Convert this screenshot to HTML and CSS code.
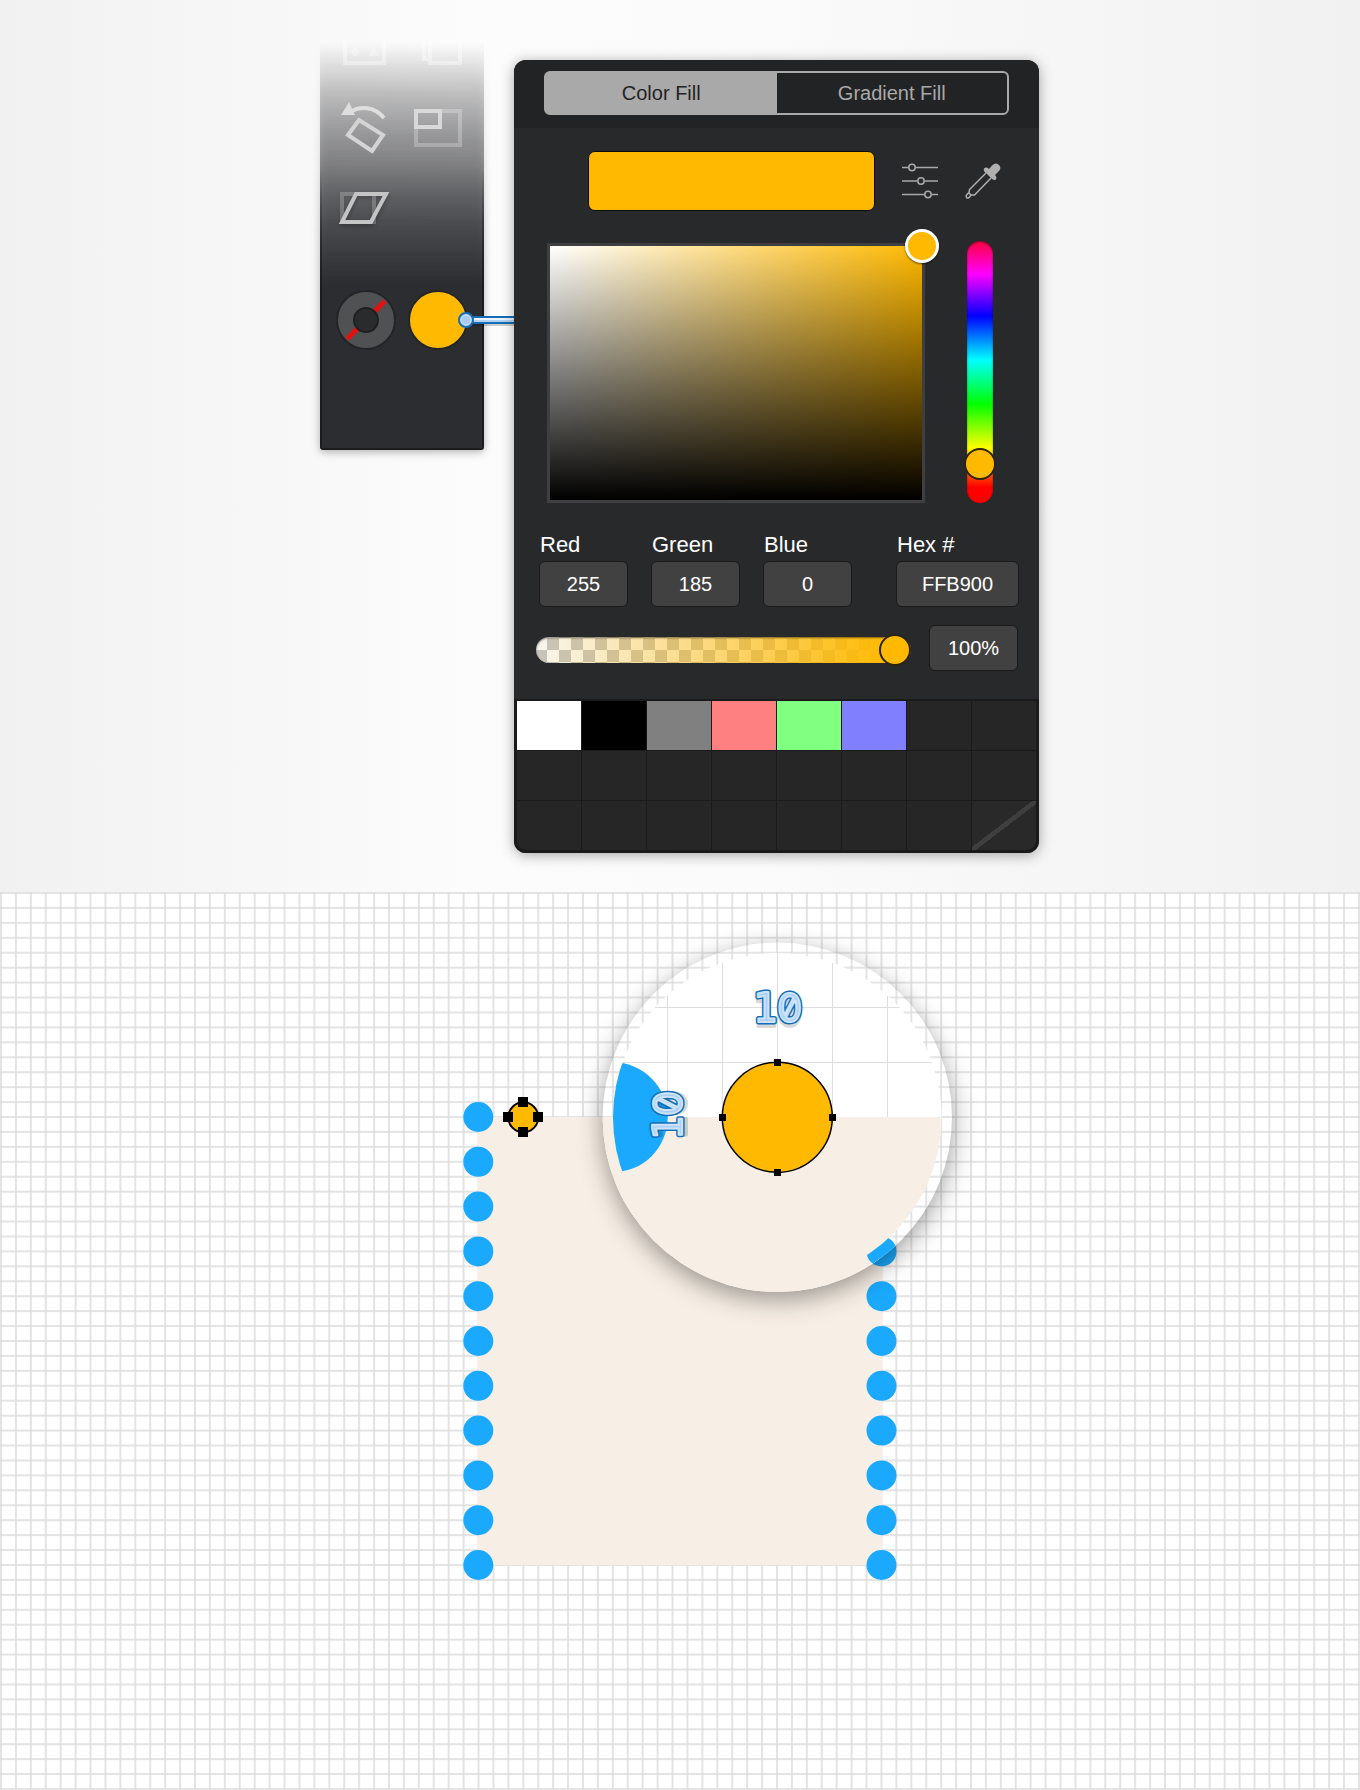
FILE: index.html
```html
<!DOCTYPE html>
<html lang="en">
<head>
<meta charset="utf-8">
<meta name="viewport" content="width=device-width, initial-scale=1">
<title>Color Fill</title>
<link rel="stylesheet" href="styles.css">
</head>
<body>
<main>
<section class="stage">
  <div class="toolbar">
    <div class="tools">
      <button class="tool" type="button" aria-label="Arrange">
        <svg width="48" height="52" viewBox="0 0 48 52"><path d="M3 18V40H42V18" fill="none" stroke="#fff" stroke-opacity=".4" stroke-width="4"/><path d="M13 24l5 5-5 5-5-5zM32 24l5 9H27z" fill="#fff" fill-opacity=".3"/></svg>
      </button>
      <button class="tool" type="button" aria-label="Duplicate">
        <svg width="48" height="52" viewBox="0 0 48 52"><path d="M16 18V40H46V18M10 18V36H16" fill="none" stroke="#fff" stroke-opacity=".4" stroke-width="4"/></svg>
      </button>
      <button class="tool" type="button" aria-label="Rotate">
        <svg width="48" height="52" viewBox="0 0 48 52"><path d="M8 9C19 2 33 4 42 15" fill="none" stroke="#dededf" stroke-width="4"/><path d="M-1 12L7 -1L13 12Z" fill="#dededf"/><path d="M17 17L41 32L30 48L6 32Z" fill="none" stroke="#d4d4d5" stroke-width="4"/></svg>
      </button>
      <button class="tool" type="button" aria-label="Scale">
        <svg width="48" height="52" viewBox="0 0 48 52"><path d="M2 8H46V42H2Z" fill="none" stroke="#fff" stroke-opacity=".25" stroke-width="4"/><path d="M2 8H26V24H2Z" fill="none" stroke="#d8d8d9" stroke-width="4"/></svg>
      </button>
      <button class="tool" type="button" aria-label="Skew">
        <svg class="skew" width="52" height="52" viewBox="0 0 52 52"><path d="M2 11H34V39H2Z" fill="none" stroke="#fff" stroke-opacity=".22" stroke-width="4"/><path d="M16 11H46L31 39H2Z" fill="none" stroke="#c4c4c4" stroke-width="4"/></svg>
      </button>
    </div>
    <div class="paints">
      <button class="paint" type="button" aria-label="Stroke: none">
        <svg width="60" height="60" viewBox="0 0 60 60"><circle cx="30" cy="30" r="29" fill="#505153" stroke="#242527" stroke-width="2"/><path d="M11 49L49 11" stroke="#e01212" stroke-width="5"/><circle cx="30" cy="30" r="12" fill="#2a2b2d" stroke="#1f2022" stroke-width="2"/></svg>
      </button>
      <button class="paint" type="button" aria-label="Fill">
        <svg width="60" height="60" viewBox="0 0 60 60"><circle cx="30" cy="30" r="29" fill="#ffb900" stroke="#242527" stroke-width="2"/></svg>
        <svg class="connector" width="60" height="20" viewBox="0 0 60 20"><path d="M12 12H60" stroke="#000" stroke-opacity=".18" stroke-width="8"/><path d="M12 10H60" stroke="#146db5" stroke-width="8"/><path d="M12 10H60" stroke="#b5d3f5" stroke-width="4"/><path d="M12 9H60" stroke="#eaf4ff" stroke-width="2"/><circle cx="10" cy="10" r="7" fill="#a9cbf3" stroke="#146db5" stroke-width="2"/><circle cx="10" cy="10" r="5" fill="none" stroke="#d5e7fb" stroke-width="1"/></svg>
      </button>
    </div>
  </div>

  <form class="panel">
    <header class="panel-head">
      <div class="tabs">
        <button class="tab tab-on" type="button">Color Fill</button>
        <button class="tab" type="button">Gradient Fill</button>
      </div>
    </header>
    <div class="panel-body">
      <div class="preview-row">
        <div class="preview"></div>
        <button class="icon" type="button" aria-label="Adjust">
          <svg width="36" height="36" viewBox="0 0 36 36" fill="none" stroke="#a9a9aa" stroke-width="1.5"><path d="M0 4.5H6.5M13.500 4.500H36M0 18H15.500M22.500 18H36M0 31.500H22.500M29.500 31.500H36"/><circle cx="10" cy="4.500" r="3.200"/><circle cx="19" cy="18" r="3.200"/><circle cx="26" cy="31.500" r="3.200"/></svg>
        </button>
        <button class="icon" type="button" aria-label="Pick color">
          <svg width="36" height="36" viewBox="0 0 36 36"><path d="M19 5.500Q21.500 3.500 24 6L27.500 2Q31 -1 34 2Q37 5 33.500 8.500L30 12Q32.500 14.500 30.500 17Q28 17.500 26 15L21 10Q18 8 19 5.500Z" fill="#b0b0b1"/><path d="M21 10L4.500 26.500L4 29.500L1.500 32Q.5 33.500 2 35Q3.500 35.500 5 33.500L6 32H9.500L26 15M3.500 29.500L6.500 32.500" fill="none" stroke="#b0b0b1" stroke-width="1.500"/></svg>
        </button>
      </div>
      <div class="field-row">
        <div class="field"><span class="field-knob"></span></div>
        <input class="hue" type="range" min="0" max="360" value="36" aria-label="Hue">
      </div>
      <div class="values">
        <label class="value">Red<input class="box" type="text" value="255"></label>
        <label class="value">Green<input class="box" type="text" value="185"></label>
        <label class="value">Blue<input class="box" type="text" value="0"></label>
        <label class="value value-hex">Hex #<input class="box" type="text" value="FFB900"></label>
      </div>
      <div class="alpha-row">
        <input class="alpha" type="range" min="0" max="100" value="100" aria-label="Opacity">
        <input class="box box-alpha" type="text" value="100%" aria-label="Opacity percent">
      </div>
    </div>
    <div class="swatches">
      <button class="swatch white" type="button" aria-label="White"></button>
      <button class="swatch black" type="button" aria-label="Black"></button>
      <button class="swatch gray" type="button" aria-label="Gray"></button>
      <button class="swatch red" type="button" aria-label="Red"></button>
      <button class="swatch green" type="button" aria-label="Green"></button>
      <button class="swatch blue" type="button" aria-label="Blue"></button>
      <span class="swatch"></span><span class="swatch"></span>
      <span class="swatch"></span><span class="swatch"></span><span class="swatch"></span><span class="swatch"></span>
      <span class="swatch"></span><span class="swatch"></span><span class="swatch"></span><span class="swatch"></span>
      <span class="swatch"></span><span class="swatch"></span><span class="swatch"></span><span class="swatch"></span>
      <span class="swatch"></span><span class="swatch"></span><span class="swatch"></span>
      <button class="swatch none" type="button" aria-label="No color"></button>
    </div>
  </form>
</section>

<section class="canvas">
  <svg class="drawing" viewBox="0 0 1360 898" role="img" aria-label="Dots snapped to a ten point grid, with a magnifier">
    <defs>
      <pattern id="grid" x="1" y="1" width="14.923" height="14.933" patternUnits="userSpaceOnUse">
        <path d="M0 0V14.933M14.923 0V14.933M0 0H14.923M0 14.933H14.923" stroke="#000" stroke-opacity=".14" stroke-width="1.500"/>
      </pattern>
      <clipPath id="rim"><circle cx="777.300" cy="225.300" r="174.700"/></clipPath>
      <clipPath id="lens"><circle cx="777.300" cy="225.300" r="164.300"/></clipPath>
      <filter id="shade" x="-20%" y="-20%" width="140%" height="140%"><feGaussianBlur stdDeviation="13"/></filter>
      <g id="ten">
        <text class="ten ten-shadow" x="-24" y="4">1<tspan class="zero">0</tspan></text>
        <text class="ten ten-edge" x="-24" y="0">1<tspan class="zero">0</tspan></text>
        <text class="ten ten-face" x="-24" y="0">1<tspan class="zero">0</tspan></text>
      </g>
      <g id="art">
        <rect width="1360" height="898" fill="#fff"/>
        <rect width="1360" height="898" fill="url(#grid)"/>
        <rect x="478" y="225" width="404" height="448" fill="#f7efe5"/>
        <g fill="#1aa9fd">
          <circle cx="478.300" cy="225" r="15"/><circle cx="478.300" cy="269.800" r="15"/><circle cx="478.300" cy="314.600" r="15"/><circle cx="478.300" cy="359.400" r="15"/><circle cx="478.300" cy="404.200" r="15"/><circle cx="478.300" cy="449" r="15"/><circle cx="478.300" cy="493.800" r="15"/><circle cx="478.300" cy="538.600" r="15"/><circle cx="478.300" cy="583.400" r="15"/><circle cx="478.300" cy="628.200" r="15"/><circle cx="478.300" cy="673" r="15"/>
          <circle cx="881.500" cy="359.400" r="15"/><circle cx="881.500" cy="404.200" r="15"/><circle cx="881.500" cy="449" r="15"/><circle cx="881.500" cy="493.800" r="15"/><circle cx="881.500" cy="538.600" r="15"/><circle cx="881.500" cy="583.400" r="15"/><circle cx="881.500" cy="628.200" r="15"/><circle cx="881.500" cy="673" r="15"/>
        </g>
      </g>
    </defs>
    <use href="#art"/>
    <circle cx="523.300" cy="225.300" r="15" fill="#ffb900" stroke="#000" stroke-width="2"/>
    <path d="M518 205h10v10h-10zM518 235h10v10h-10zM503 220h10v10h-10zM533 220h10v10h-10z"/>
    <circle cx="777.300" cy="233" r="174" fill-opacity=".4" filter="url(#shade)"/>
    <g clip-path="url(#rim)"><use href="#art"/></g>
    <g clip-path="url(#lens)">
      <rect x="600" y="50" width="360" height="175" fill="#fff"/>
      <path d="M667.500 50V225M722.500 50V225M777.500 50V225M832.500 50V225M887.500 50V225M600 115.500H960M600 170.500H960" stroke="#dedede" stroke-width="1"/>
      <rect x="600" y="225" width="360" height="180" fill="#f7efe5"/>
      <circle cx="612.700" cy="225.300" r="55" fill="#1aa9fd"/>
    </g>
    <circle cx="777.300" cy="225.300" r="55" fill="#ffb900" stroke="#000" stroke-width="1.500"/>
    <path d="M774 167h7v7h-7zM774 277h7v7h-7zM719 222h7v7h-7zM829 222h7v7h-7z"/>
    <use href="#ten" transform="translate(777 130)"/>
    <use href="#ten" transform="translate(682 224) rotate(-90)"/>
  </svg>
</section>
</main>
</body>
</html>
```
FILE: styles.css
```css
* { box-sizing: border-box; }

body {
  margin: 0;
  font-family: "Liberation Sans", Arial, sans-serif;
  background: #fff;
}

button {
  margin: 0;
  padding: 0;
  border: 0;
  background: none;
  font: inherit;
  color: inherit;
}

svg {
  display: block;
  overflow: visible;
}

.stage {
  display: flex;
  justify-content: center;
  align-items: flex-start;
  gap: 30px;
  padding: 0 1px 39px 0;
  background: linear-gradient(90deg, #f1f1f1, #fcfcfc 35%, #fbfbfb 55%, #f1f1f1);
}

/* Toolbar */

.toolbar {
  position: relative;
  width: 164px;
  margin-top: 9px;
  padding: 0 10px 59px;
}

.toolbar::before {
  content: "";
  position: absolute;
  inset: 0;
  border-radius: 0 0 3px 3px;
  background:
    linear-gradient(transparent 160px, #1b1c1e 280px) left / 2px 100% no-repeat,
    linear-gradient(transparent 160px, #1b1c1e 280px) right / 2px 100% no-repeat,
    linear-gradient(#1b1c1e, #1b1c1e) bottom / 100% 2px no-repeat,
    linear-gradient(rgba(44, 45, 49, 0) 33px, rgba(44, 45, 49, .09) 54px, rgba(44, 45, 49, .25) 88px, rgba(44, 45, 49, .38) 121px, rgba(44, 45, 49, .5) 154px, rgba(44, 45, 49, .68) 188px, rgba(44, 45, 49, .82) 221px, #2c2d31 276px);
  filter: drop-shadow(0 2px 4px rgba(0, 0, 0, .3));
}

.tools,
.paints {
  position: relative;
  display: grid;
  grid-template-columns: 1fr 1fr;
}

.tools { grid-auto-rows: 80px; }
.paints { grid-auto-rows: 142px; }

.tool,
.paint {
  display: flex;
  align-items: center;
  justify-content: center;
}

.skew { filter: drop-shadow(0 2px 2px rgba(0, 0, 0, .3)); }

.paint { position: relative; }

.connector {
  position: absolute;
  left: 54px;
  top: 61px;
}

/* Fill panel */

.panel {
  position: relative;
  width: 525px;
  margin-top: 60px;
  border-radius: 12px;
  background: #28292b;
  box-shadow: 0 2px 14px rgba(0, 0, 0, .35);
  color: #fff;
}

.panel-head {
  padding: 11px 30px 13px;
  border-radius: 12px 12px 0 0;
  background: #222325;
}

.tabs {
  display: grid;
  grid-template-columns: 1fr 1fr;
  height: 44px;
  border: 2px solid #a9a9a9;
  border-radius: 6px;
}

.tab {
  font-size: 20px;
  color: #a9a9a9;
}

.tab-on {
  background: #a9a9a9;
  color: #222325;
}

.panel-body { padding: 23px 20px 28px 22px; }

.preview-row {
  display: flex;
  align-items: center;
  gap: 27px;
  padding-left: 52px;
}

.preview {
  width: 287px;
  height: 60px;
  border: 1px solid #0c0c0c;
  border-radius: 7px;
  background: #ffb900;
}

.field-row {
  display: flex;
  align-items: flex-end;
  gap: 39px;
  margin-top: 30px;
  padding-left: 11px;
}

.field {
  position: relative;
  width: 378px;
  height: 260px;
  border: 3px solid #3f3f41;
  background:
    linear-gradient(transparent, #000),
    linear-gradient(90deg, #fff, #ffb900);
  background-clip: padding-box;
}

.field-knob {
  position: absolute;
  top: -17px;
  right: -17px;
  width: 34px;
  height: 34px;
  border: 3px solid #fff;
  border-radius: 50%;
  background: #ffb900;
  box-shadow: 0 1px 2px rgba(0, 0, 0, .6);
}

input[type="range"] {
  appearance: none;
  margin: 0;
  background: none;
}

input[type="range"]::-webkit-slider-thumb {
  appearance: none;
  width: 32px;
  height: 32px;
  border: 2px solid #2a2410;
  border-radius: 50%;
  background: #ffb900;
}

.hue {
  width: 32px;
  height: 262px;
  writing-mode: vertical-lr;
  direction: rtl;
}

.hue::-webkit-slider-runnable-track {
  width: 26px;
  height: 262px;
  border-radius: 13px;
  background: linear-gradient(#ff0040, #f0f 33px, #00f 75px, #0ff 119px, #0f0 163px, #ff0 207px, #f00 246px);
  box-shadow: inset 0 1px 2px rgba(0, 0, 0, .5);
}

.hue::-webkit-slider-thumb { margin-left: -3px; }

.values {
  display: flex;
  gap: 23px;
  margin-top: 29px;
  padding-left: 3px;
}

.value {
  display: flex;
  flex-direction: column;
  gap: 3px;
  width: 89px;
  font-size: 22px;
  line-height: 26px;
  text-indent: 1px;
}

.value-hex {
  width: 123px;
  margin-left: 21px;
}

.box {
  width: 100%;
  height: 46px;
  padding: 0;
  border: 1px solid #1a1a1b;
  border-radius: 6px;
  background: #414141;
  font: 20px "Liberation Sans", Arial, sans-serif;
  color: #fff;
  text-align: center;
  text-indent: 0;
}

.alpha-row {
  display: flex;
  align-items: center;
  gap: 18px;
  margin-top: 18px;
}

.alpha {
  width: 375px;
  height: 32px;
  padding-top: 2px;
}

.alpha::-webkit-slider-runnable-track {
  height: 26px;
  border-radius: 13px;
  background:
    linear-gradient(90deg, rgba(255, 185, 0, .04), #ffb900 95%),
    repeating-conic-gradient(#f8f8f8 0 25%, #c4c4c4 0 50%) 11px 1px / 24px 24px;
  box-shadow: inset 0 1px 2px rgba(0, 0, 0, .5);
}

.alpha::-webkit-slider-thumb { margin-top: -3px; }

.alpha-row .alpha { margin-top: 2px; }

.box-alpha { width: 89px; }

.swatches {
  display: grid;
  grid-template-columns: repeat(8, 1fr);
  grid-auto-rows: 49px;
  gap: 1px;
  padding: 2px 3px 3px;
  border-radius: 0 0 12px 12px;
  background: #1a1a1a;
}

.swatch { background: #262626; }
.white { background: #fff; }
.black { background: #000; }
.gray { background: #808080; }
.red { background: #ff8080; }
.green { background: #80ff80; }
.blue { background: #8080ff; }

.swatch:nth-child(17) { border-radius: 0 0 0 9px; }

.none {
  border-radius: 0 0 9px 0;
  background: linear-gradient(to bottom right, #292929 47%, #3f3f3f 47%, #3f3f3f 53%, #292929 53%);
}

/* Drawing canvas */

.drawing {
  width: 100%;
  height: auto;
}

.ten {
  font: 40px "DejaVu Sans Mono", monospace;
  stroke-linejoin: round;
}

.zero {
  font-family: Inter, sans-serif;
  font-feature-settings: "zero";
}

.ten-shadow {
  fill: #000;
  stroke: #000;
  stroke-width: 4px;
  opacity: .15;
}

.ten-edge {
  fill: #146db5;
  stroke: #146db5;
  stroke-width: 5px;
}

.ten-face {
  fill: #a9cff6;
  stroke: #cde3fb;
  stroke-width: 2px;
}
```
